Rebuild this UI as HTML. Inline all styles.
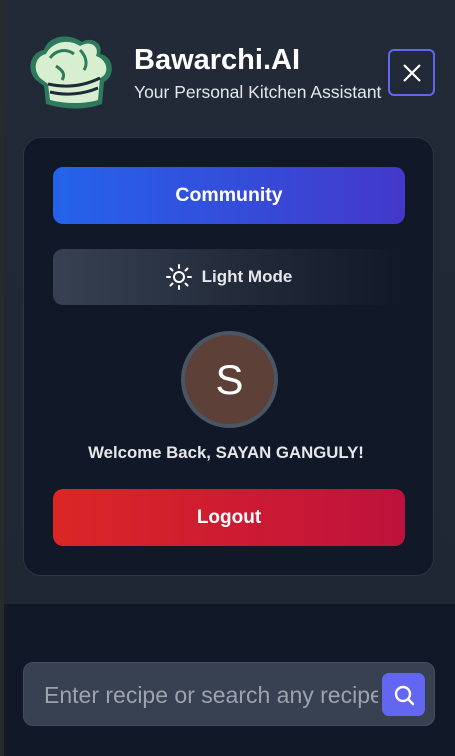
<!DOCTYPE html>
<html><head><style>
*{margin:0;padding:0;box-sizing:border-box}
body{width:455px;height:756px;background:#111827;font-family:"Liberation Sans",sans-serif;position:relative;overflow:hidden}
.left{position:absolute;left:0;top:0;width:4px;height:756px;background:#2a2a2a}
.top{position:absolute;left:4px;top:0;width:451px;height:604px;background:linear-gradient(180deg,#222a38,#1f2733)}
.card{position:absolute;left:23px;top:137px;width:411px;height:439px;background:#111827;border:1px solid #2b3545;border-radius:18px}
.btn{position:absolute;left:53px;width:352px;border-radius:10px;color:#fff;font-weight:bold;display:flex;align-items:center;justify-content:center}
</style></head><body>
<div class="left"></div>
<div class="top"></div>
<svg style="position:absolute;left:26px;top:30px" width="92" height="82" viewBox="0 0 92 82">
<path d="M10 50 C0 40 4 22 18 20 C22 6 42 2 56 12 C66 6 78 14 74 24 C88 26 90 46 78 52 L76 74 C60 80 40 80 20 74 L18 56 Z" fill="#2e7a5e"/>
<path d="M14 48 C6 38 10 26 20 24 C26 12 42 8 54 16 C64 10 74 16 70 26 C82 30 84 44 74 48 L72 70 C58 74 40 74 24 70 L22 54 Z" fill="#d8efcf"/>
<path d="M22 54 C40 58 58 56 74 48 M24 62 C40 66 58 64 72 58" stroke="#1f2937" stroke-width="3" fill="none"/>
<path d="M24 28 C30 20 40 18 48 24 M54 20 C60 26 62 34 58 40 M30 36 C36 40 40 44 36 50" stroke="#2e7a5e" stroke-width="3" fill="none"/>
</svg>
<div style="position:absolute;left:134px;top:44px;color:#fff;font-weight:bold;font-size:29px">Bawarchi.AI</div>
<div style="position:absolute;left:134px;top:82px;color:#e5e7eb;font-size:17.5px">Your Personal Kitchen Assistant</div>
<div style="position:absolute;left:388px;top:49px;width:47px;height:47px;border:2px solid #6366f1;border-radius:6px;display:flex;align-items:center;justify-content:center">
<svg width="22" height="22" viewBox="0 0 22 22"><path d="M3 3L19 19M19 3L3 19" stroke="#fff" stroke-width="2.2"/></svg></div>
<div class="card"></div>
<div class="btn" style="top:167px;height:57px;background:linear-gradient(90deg,#2563eb,#4338ca);font-size:19.5px">Community</div>
<div class="btn" style="top:249px;height:56px;background:linear-gradient(90deg,#374151,#111827);font-size:17px;color:#e5e7eb">
<svg width="26" height="26" viewBox="0 0 26 26" style="margin-right:10px"><circle cx="13" cy="13" r="5" stroke="#fff" stroke-width="2" fill="none"/><g stroke="#fff" stroke-width="2" stroke-linecap="round"><path d="M13 1v3M13 22v3M1 13h3M22 13h3M4.5 4.5l2 2M19.5 19.5l2 2M4.5 21.5l2-2M19.5 6.5l2-2"/></g></svg>Light Mode</div>
<div style="position:absolute;left:181px;top:331px;width:97px;height:97px;border-radius:50%;background:#5d4037;border:4px solid #4b5563;color:#fff;font-size:42px;display:flex;align-items:center;justify-content:center">S</div>
<div style="position:absolute;left:0;width:455px;top:443px;text-align:center;color:#e5e7eb;font-weight:bold;font-size:16.8px;padding-right:3px">Welcome Back, SAYAN GANGULY!</div>
<div class="btn" style="top:489px;height:57px;background:linear-gradient(90deg,#dc2626,#be123c);font-size:19px">Logout</div>
<div style="position:absolute;left:23px;top:662px;width:412px;height:64px;background:#374151;border:1px solid #424c5c;border-radius:10px;overflow:hidden">
<div style="position:absolute;left:20px;top:19px;width:334px;overflow:hidden;white-space:nowrap;color:#9ca3af;font-size:23px">Enter recipe or search any recipe</div>
<div style="position:absolute;left:358px;top:10px;width:43px;height:43px;background:#6366f1;border-radius:7px;display:flex;align-items:center;justify-content:center">
<svg width="24" height="24" viewBox="0 0 24 24"><circle cx="11" cy="11" r="7" stroke="#fff" stroke-width="2.4" fill="none"/><path d="M16 16l5 5" stroke="#fff" stroke-width="2.4" stroke-linecap="round"/></svg></div>
</div>
</body></html>
